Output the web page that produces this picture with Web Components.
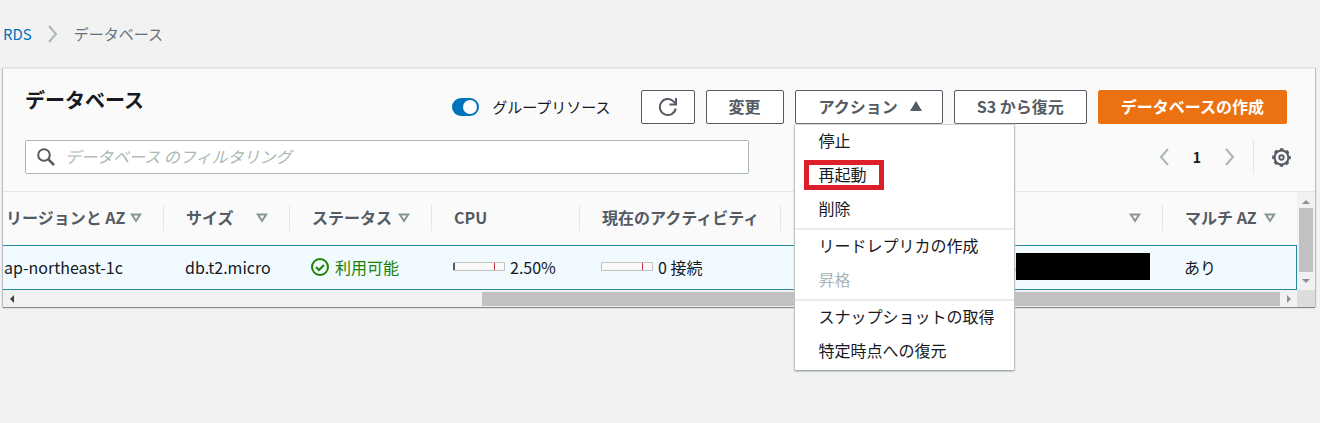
<!DOCTYPE html>
<html lang="ja">
<head>
<meta charset="utf-8">
<meta name="viewport" content="width=device-width, initial-scale=1">
<title>RDS データベース</title>
<style>
    :root {
        --text: #16191f;
        --text-head: #545b64;
        --muted: #687078;
        --disabled: #aab7b8;
        --line: #e4e6e6;
        --link: #0073bb;
        --orange: #ec7211;
        --green: #1d8102;
    }
    body {
        min-height: 100vh;
        margin: 0;
        background: #f2f2f2;
        color: var(--text);
        font: 16px/24px "Noto Sans CJK JP", "Noto Sans", sans-serif;
    }
</style>
</head>
<body>
<rds-page>
    <bread-crumbs slot="nav"></bread-crumbs>
    <db-panel>
        <span slot="title">データベース</span>
        <toggle-switch slot="actions">グループリソース</toggle-switch>
        <aws-button slot="actions" icon label="更新">
            <svg width="20" height="20" viewBox="0 0 20 20" fill="none" stroke="#545b64" stroke-width="2"><path d="M17.700 11.500A8 8 0 1 1 15.700 4.600L18 7"/><path d="M18 1v6.500h-6.500"/></svg>
        </aws-button>
        <aws-button slot="actions">変更</aws-button>
        <action-menu slot="actions"></action-menu>
        <aws-button slot="actions">S3 から復元</aws-button>
        <aws-button slot="actions" primary>データベースの作成</aws-button>
        <search-box slot="filter"></search-box>
        <page-nav slot="filter"></page-nav>
        <db-table></db-table>
    </db-panel>
</rds-page>

<script>
// Attach an open shadow root and fill it
function mount(el, html) {
    el.attachShadow({ mode: 'open' }).innerHTML = html;
}

class RdsPage extends HTMLElement {
    connectedCallback() {
        mount(this, `
            <style>
                :host { display: block; box-sizing: border-box; min-height: 100vh; padding: 22px 5px 0 3px; }
                main { margin-top: 22px; }
            </style>
            <slot name="nav"></slot>
            <main><slot></slot></main>
        `);
    }
}

class BreadCrumbs extends HTMLElement {
    connectedCallback() {
        mount(this, `
            <style>
                :host { display: block; font-size: 15px; }
                nav { display: flex; align-items: center; gap: 16px; }
                a { color: var(--link); text-decoration: none; }
                span { color: var(--muted); }
            </style>
            <nav aria-label="パンくず">
                <a href="#rds">RDS</a>
                <svg width="10" height="18" viewBox="0 0 10 18" fill="none" stroke="#aab7b8" stroke-width="2"><path d="M1 1l7 8-7 8"/></svg>
                <span>データベース</span>
            </nav>
        `);
    }
}

class DbPanel extends HTMLElement {
    connectedCallback() {
        mount(this, `
            <style>
                :host {
                    display: block;
                    background: #fafafa;
                    border-top: 1px solid #eaeded;
                    box-shadow: 0 1px 1px #87898c, -1px 0 1px #c3c8ca, 1px 0 1px #c3c8ca;
                }
                header { padding: 21px 24px 17px 22px; }
                .top { display: flex; justify-content: space-between; padding-right: 4px; }
                h1 { margin: 0; font-size: 20px; line-height: 20px; font-weight: 700; }
                .actions { display: flex; align-items: center; gap: 11px; }
                .filter { display: flex; align-items: center; justify-content: space-between; margin-top: 16px; }
            </style>
            <header>
                <div class="top">
                    <h1><slot name="title"></slot></h1>
                    <div class="actions"><slot name="actions"></slot></div>
                </div>
                <div class="filter"><slot name="filter"></slot></div>
            </header>
            <slot></slot>
        `);
    }
}

class ToggleSwitch extends HTMLElement {
    connectedCallback() {
        mount(this, `
            <style>
                :host { display: block; margin-right: 19px; font-size: 15px; }
                label { display: flex; align-items: center; gap: 13px; line-height: 24px; }
                input {
                    appearance: none;
                    display: flex;
                    justify-content: flex-end;
                    box-sizing: border-box;
                    width: 27px;
                    height: 18px;
                    margin: 0;
                    padding: 2px;
                    border-radius: 9px;
                    background: var(--link);
                }
                input::after { content: ""; width: 14px; height: 14px; border-radius: 50%; background: #fff; }
                input:not(:checked) { justify-content: flex-start; background: var(--muted); }
            </style>
            <label><input type="checkbox" role="switch" checked><slot></slot></label>
        `);
    }
}

const buttonCss = `
    button {
        display: flex;
        align-items: center;
        box-sizing: border-box;
        height: 34px;
        padding: 0 22px 2px;
        border: 1px solid #545b64;
        border-radius: 2px;
        background: #fff;
        color: var(--text-head);
        font: inherit;
        font-weight: 700;
        white-space: nowrap;
        cursor: pointer;
    }
`;

class AwsButton extends HTMLElement {
    connectedCallback() {
        const label = this.getAttribute('label');
        mount(this, `
            <style>
                :host { display: block; }
                ${buttonCss}
                :host([icon]) button { padding: 0 16px; }
                :host([primary]) button { background: var(--orange); border-color: var(--orange); color: #fff; }
            </style>
            <button type="button" ${label ? `aria-label="${label}"` : ''}><slot></slot></button>
        `);
    }
}

class ActionMenu extends HTMLElement {
    connectedCallback() {
        const groups = [
            [{ text: '停止' }, { text: '再起動', cls: 'marked' }, { text: '削除' }],
            [{ text: 'リードレプリカの作成' }, { text: '昇格', disabled: true }],
            [{ text: 'スナップショットの取得' }, { text: '特定時点への復元' }]
        ];
        mount(this, `
            <style>
                :host { display: block; position: relative; }
                ${buttonCss}
                .toggle { gap: 12px; padding: 0 20px 2px 23px; }
                .menu {
                    position: absolute;
                    z-index: 5;
                    top: 100%;
                    left: 0;
                    width: 219px;
                    margin-top: 1px;
                    background: #fff;
                    box-shadow: 0 1px 2px #879596, 0 0 1px 1px #d5dbdb;
                }
                .group { padding-bottom: 1px; }
                .group + .group { border-top: 2px solid #eaeded; }
                .group button {
                    width: 100%;
                    padding: 3px 24px 7px;
                    border: 0;
                    background: none;
                    color: var(--text);
                    font-weight: 400;
                    line-height: 24px;
                }
                .group button:disabled { color: var(--disabled); }
                .marked span { position: relative; }
                .marked span::after {
                    content: "";
                    position: absolute;
                    inset: -2px -17px -4px -15px;
                    border: 5px solid #dc1f2b;
                }
            </style>
            <button type="button" class="toggle" aria-haspopup="menu" aria-expanded="true">
                アクション
                <svg width="12" height="10" viewBox="0 0 12 10" fill="#545b64"><path d="M6 0l6 10H0z"/></svg>
            </button>
            <div class="menu" role="menu">
                ${groups.map(items => `
                    <div class="group" role="group">
                        ${items.map(item => `
                            <button type="button" role="menuitem" class="${item.cls || ''}" ${item.disabled ? 'disabled' : ''}><span>${item.text}</span></button>
                        `).join('')}
                    </div>
                `).join('')}
            </div>
        `);

        // Open and close the menu
        const toggle = this.shadowRoot.querySelector('.toggle');
        const menu = this.shadowRoot.querySelector('.menu');
        toggle.addEventListener('click', () => {
            menu.hidden = !menu.hidden;
            menu.style.display = menu.hidden ? 'none' : '';
            toggle.setAttribute('aria-expanded', String(!menu.hidden));
        });
    }
}

class SearchBox extends HTMLElement {
    connectedCallback() {
        mount(this, `
            <style>
                :host { display: block; flex: 0 1 724px; }
                label {
                    display: flex;
                    align-items: center;
                    gap: 10px;
                    box-sizing: border-box;
                    height: 34px;
                    padding: 0 11px;
                    border: 1px solid #aab7b8;
                    border-radius: 2px;
                    background: #fff;
                }
                input { flex: 1; min-width: 0; padding: 0 0 2px; border: 0; outline: 0; background: none; font: inherit; color: var(--text); }
                input::placeholder { color: var(--disabled); font-style: italic; opacity: 1; }
            </style>
            <label>
                <svg width="18" height="18" viewBox="0 0 18 18" fill="none" stroke="#545b64" stroke-width="2"><circle cx="7" cy="7" r="5.800"/><path d="M11.200 11.200l5.800 5.800" stroke-width="2.500"/></svg>
                <input type="text" aria-label="フィルタリング" placeholder="データベース のフィルタリング">
            </label>
        `);
    }
}

class PageNav extends HTMLElement {
    connectedCallback() {
        mount(this, `
            <style>
                :host { display: flex; align-items: center; }
                nav { display: flex; align-items: center; gap: 18px; padding-right: 18px; border-right: 1px solid var(--line); height: 34px; }
                button { display: flex; padding: 0; border: 0; background: none; cursor: pointer; }
                b { width: 20px; font-size: 14px; text-align: center; }
                .gear { margin-left: 18px; }
            </style>
            <nav aria-label="ページ">
                <button type="button" aria-label="前へ"><svg width="10" height="18" viewBox="0 0 10 18" fill="none" stroke="#aab7b8" stroke-width="2"><path d="M9 1L2 9l7 8"/></svg></button>
                <b>1</b>
                <button type="button" aria-label="次へ"><svg width="10" height="18" viewBox="0 0 10 18" fill="none" stroke="#aab7b8" stroke-width="2"><path d="M1 1l7 8-7 8"/></svg></button>
            </nav>
            <button type="button" class="gear" aria-label="設定">
                <svg width="19" height="19" viewBox="0 0 20 20" fill="none" stroke="#545b64">
                    <circle cx="10" cy="10" r="7.300" stroke-width="2.200"/>
                    <circle cx="10" cy="10" r="8.800" stroke-width="2" stroke-dasharray="3.800 3.111" stroke-dashoffset="1.900"/>
                    <circle cx="10" cy="10" r="2.300" stroke-width="2"/>
                </svg>
            </button>
        `);
    }
}

// Small bar with a limit mark, used in the CPU and activity columns
class UsageMeter extends HTMLElement {
    connectedCallback() {
        mount(this, `
            <style>
                :host { display: flex; align-items: center; gap: 5px; }
                svg { flex: none; }
            </style>
            <svg width="52" height="9" viewBox="0 0 52 9">
                <path d="M.5.5h51v8H.5z" fill="#fafafa" stroke="#bfc3c4"/>
                <path d="M41 1h1v7h-1z" fill="#c7313a"/>
                ${this.hasAttribute('used') ? '<path d="M0 1h2v7H0z" fill="#545b64"/>' : ''}
            </svg>
            <slot></slot>
        `);
    }
}

class DbTable extends HTMLElement {
    connectedCallback() {
        const columns = [
            { name: 'リージョンと AZ', width: 161, sort: true },
            { name: 'サイズ', width: 126, sort: true },
            { name: 'ステータス', width: 142, sort: true },
            { name: 'CPU', width: 148 },
            { name: '現在のアクティビティ', width: 201 },
            { name: '', sort: true },
            { name: 'マルチ AZ', width: 134, sort: true }
        ];
        mount(this, `
            <style>
                :host {
                    display: grid;
                    grid-template-columns: 1fr 18px;
                    border-top: 1px solid var(--line);
                }
                table { width: 100%; table-layout: fixed; border-collapse: separate; border-spacing: 0; }
                th, td { padding: 0 0 2px; white-space: nowrap; text-align: left; }
                th { height: 51px; color: var(--text-head); }
                .head {
                    display: flex;
                    align-items: center;
                    justify-content: space-between;
                    height: 26px;
                    padding: 0 21px 0 22px;
                    border-right: 1px solid var(--line);
                }
                .head span { padding-bottom: 2px; }
                th:first-child .head { padding-left: 3px; }
                th:last-child .head { border-right: 0; }
                td {
                    height: 41px;
                    padding-left: 21px;
                    background: #f1faff;
                    border-top: 1px solid #2a8ba0;
                    border-bottom: 1px solid #2a8ba0;
                }
                td:first-child { padding-left: 1px; }
                td:last-child { border-right: 1px solid #2a8ba0; }
                .status { display: flex; align-items: center; gap: 6px; color: var(--green); }
                .endpoint { display: flex; align-items: center; justify-content: flex-end; padding-right: 13px; }
                .redacted { width: 134px; height: 27px; background: #000; }
                .vbar, .hbar { display: flex; align-items: center; background: #f1f1f1; }
                .vbar { flex-direction: column; justify-content: space-between; padding: 8px 0 7px; }
                .vbar i { flex: 1; width: 14px; margin: 4px 0 7px; background: #c1c1c1; }
                .hbar { height: 17px; padding: 0 6px 0 7px; }
                .hbar i { height: 14px; flex: 1; margin: 0 7px 0 36.5%; background: #c1c1c1; }
                .corner { background: #dcdcdc; }
            </style>
            <table>
                <colgroup>
                    ${columns.map(c => `<col ${c.width ? `style="width: ${c.width}px"` : ''}>`).join('')}
                </colgroup>
                <thead>
                    <tr>
                        ${columns.map(c => `
                            <th scope="col"><div class="head">
                                <span>${c.name}</span>
                                ${c.sort ? '<svg width="12" height="10" viewBox="0 0 12 10" fill="none" stroke="#879596" stroke-width="2"><path d="M1.800 1.500h8.400L6 8z"/></svg>' : ''}
                            </div></th>
                        `).join('')}
                    </tr>
                </thead>
                <tbody>
                    <tr>
                        <td>ap-northeast-1c</td>
                        <td>db.t2.micro</td>
                        <td><div class="status">
                            <svg width="18" height="18" viewBox="0 0 18 18" fill="none" stroke="#1d8102" stroke-width="2"><circle cx="9" cy="9" r="8"/><path d="M5 9l3 3 5-5"/></svg>
                            利用可能
                        </div></td>
                        <td><usage-meter used>2.50%</usage-meter></td>
                        <td><usage-meter>0 接続</usage-meter></td>
                        <td><div class="endpoint">o<div class="redacted"></div></div></td>
                        <td>あり</td>
                    </tr>
                </tbody>
            </table>
            <div class="vbar">
                <svg width="8" height="4" viewBox="0 0 8 4" fill="#8f8f8f"><path d="M4 0l4 4H0z"/></svg>
                <i></i>
                <svg width="8" height="4" viewBox="0 0 8 4" fill="#8f8f8f"><path d="M0 0h8L4 4z"/></svg>
            </div>
            <div class="hbar">
                <svg width="4" height="8" viewBox="0 0 4 8" fill="#404040"><path d="M4 0v8L0 4z"/></svg>
                <i></i>
                <svg width="4" height="8" viewBox="0 0 4 8" fill="#8f8f8f"><path d="M0 0l4 4-4 4z"/></svg>
            </div>
            <div class="corner"></div>
        `);
    }
}

customElements.define('rds-page', RdsPage);
customElements.define('bread-crumbs', BreadCrumbs);
customElements.define('db-panel', DbPanel);
customElements.define('toggle-switch', ToggleSwitch);
customElements.define('aws-button', AwsButton);
customElements.define('action-menu', ActionMenu);
customElements.define('search-box', SearchBox);
customElements.define('page-nav', PageNav);
customElements.define('usage-meter', UsageMeter);
customElements.define('db-table', DbTable);
</script>
</body>
</html>
